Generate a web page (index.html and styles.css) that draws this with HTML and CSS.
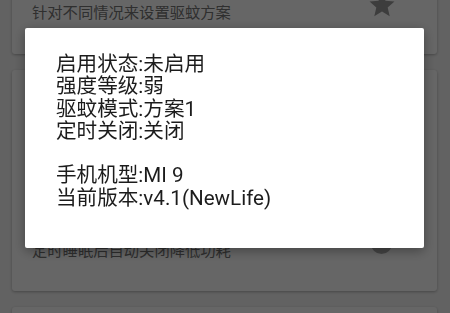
FILE: index.html
```html
<!DOCTYPE html>
<html lang="zh">
<head>
<meta charset="utf-8">
<title>驱蚊</title>
<link rel="stylesheet" href="styles.css">
</head>
<body>
<div class="list">
  <section class="card card-first">
    <div class="row">
      <div class="texts">
        <div class="sub">针对不同情况来设置驱蚊方案</div>
      </div>
      <svg class="star" viewBox="0 0 24 24"><path d="M12 17.27L18.18 21l-1.64-7.03L22 9.24l-7.19-.61L12 2 9.19 8.63 2 9.24l5.46 4.73L5.82 21z"/></svg>
    </div>
  </section>
  <section class="card card-tall">
    <div class="row">
      <div class="texts">
        <div class="title">定时关闭</div>
        <div class="sub">定时睡眠后自动关闭降低功耗</div>
      </div>
      <span class="thumb"></span>
    </div>
  </section>
  <section class="card card-next"></section>
</div>

<div class="scrim"></div>
<div class="dialog">
  <div class="line">启用状态:未启用</div>
  <div class="line">强度等级:弱</div>
  <div class="line">驱蚊模式:方案1</div>
  <div class="line">定时关闭:关闭</div>
  <div class="line blank"></div>
  <div class="line">手机机型:MI 9</div>
  <div class="line">当前版本:v4.1(NewLife)</div>
</div>
</body>
</html>
```
FILE: styles.css
```css
html, body {
  margin: 0;
  padding: 0;
}
body {
  width: 450px;
  height: 313px;
  overflow: hidden;
  background: #f5f5f5;
  font-family: Roboto, "Noto Sans CJK SC", sans-serif;
}
.list {
  display: flex;
  flex-direction: column;
  gap: 16px;
  margin-top: -56px;
  padding: 0 13px 0 12px;
}
.card {
  background: #ffffff;
  border-radius: 3px;
  box-shadow: 0 1px 3px rgba(0, 0, 0, 0.28);
  padding: 31px 40px 31px 20px;
}
.card-first {
  padding-top: 59px;
}
.card-tall {
  height: 221px;
  box-sizing: border-box;
  display: flex;
  flex-direction: column;
  justify-content: flex-end;
  padding-bottom: 30px;
}
.card-next {
  height: 60px;
}
.row {
  display: flex;
  align-items: flex-end;
}
.texts {
  flex: 1;
  display: flex;
  flex-direction: column;
  gap: 4px;
}
.title {
  font-size: 18px;
  line-height: 24px;
  color: #212121;
}
.sub {
  font-size: 15.3px;
  line-height: 20px;
  color: #757575;
}
.star {
  width: 30px;
  height: 30px;
  fill: #9a9a9a;
  margin-top: -13px;
  margin-bottom: 3px;
}
.thumb {
  width: 21px;
  height: 21px;
  border-radius: 50%;
  background: #acacac;
  margin: 0 5px 7px 4px;
}
.scrim {
  position: fixed;
  inset: 0;
  background: rgba(0, 0, 0, 0.6);
}
.dialog {
  position: fixed;
  left: 25px;
  top: 28px;
  width: 399px;
  height: 220px;
  box-sizing: border-box;
  padding: 25px 20px 0 31px;
  background: #ffffff;
  border-radius: 2px;
  box-shadow: 0 3px 12px rgba(0, 0, 0, 0.35);
  color: #1c1c1c;
  font-size: 20.6px;
  line-height: 22.3px;
}
.line {
  white-space: nowrap;
}
.blank {
  height: 22.3px;
}
```
